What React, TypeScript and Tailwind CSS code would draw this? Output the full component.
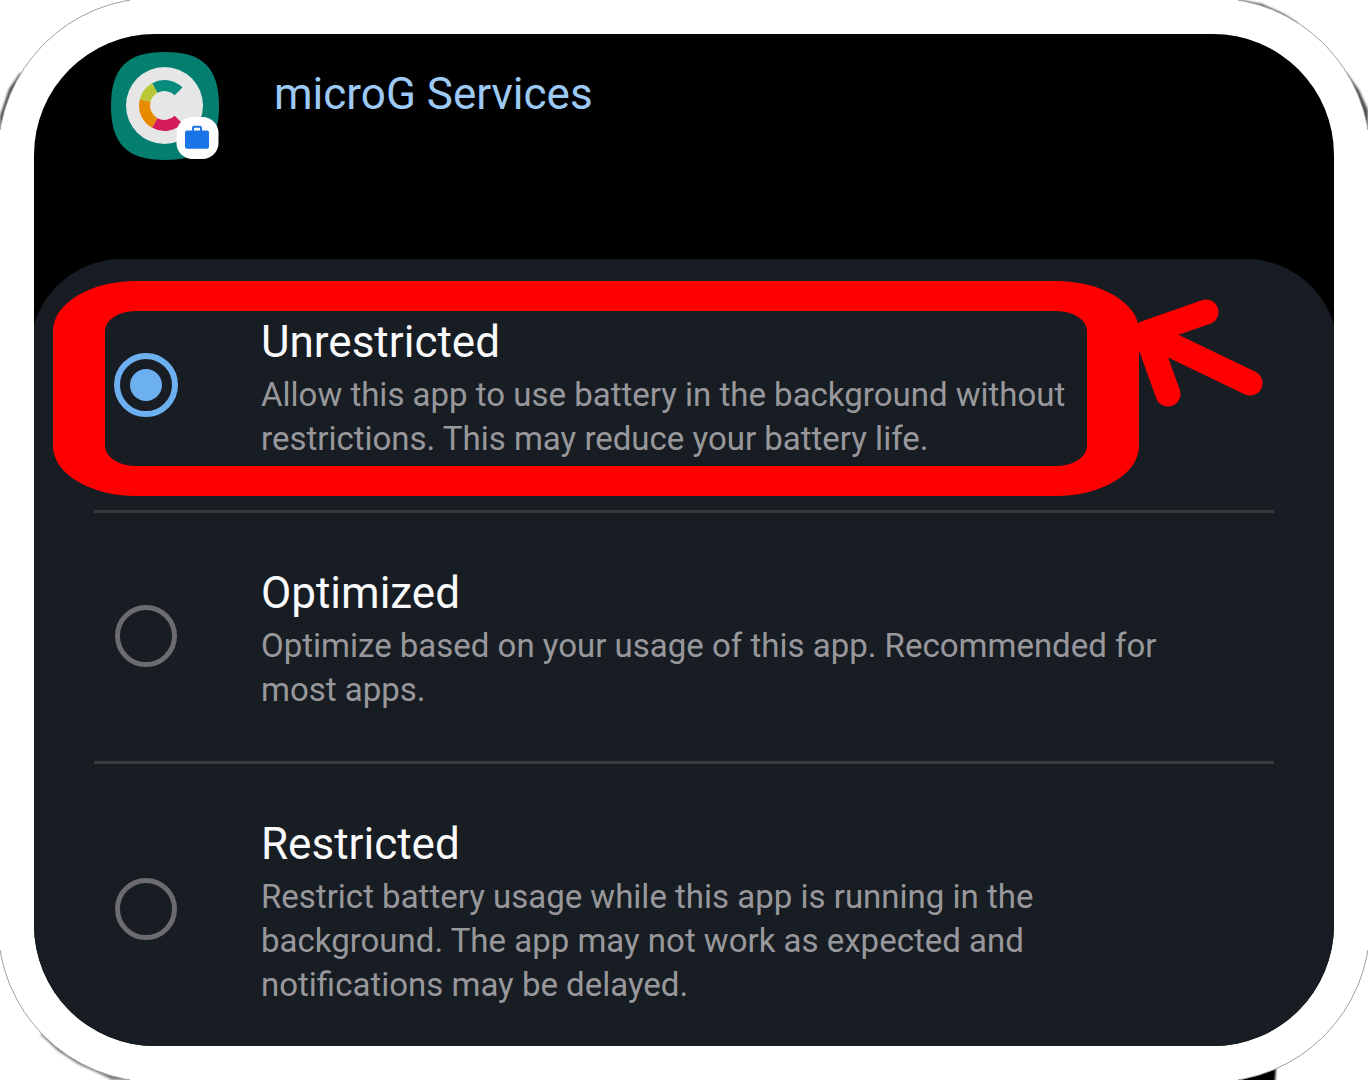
import { useState } from "react";

type Option = { id: string; title: string; text: string };

const options: Option[] = [
  {
    id: "unrestricted",
    title: "Unrestricted",
    text: "Allow this app to use battery in the background without restrictions. This may reduce your battery life.",
  },
  {
    id: "optimized",
    title: "Optimized",
    text: "Optimize based on your usage of this app. Recommended for most apps.",
  },
  {
    id: "restricted",
    title: "Restricted",
    text: "Restrict battery usage while this app is running in the background. The app may not work as expected and notifications may be delayed.",
  },
];

function AppIcon() {
  return (
    <svg viewBox="0 0 108 108" className="size-[108px] shrink-0" aria-hidden="true">
      <path
        d="M54 0C92 0 108 16 108 54S92 108 54 108 0 92 0 54 16 0 54 0Z"
        fill="#047e6f"
      />
      <circle cx="53.5" cy="53.5" r="38.5" fill="#e6e6e6" />
      <g fill="none" strokeWidth="11">
        <path d="M67.6 39.4A20 20 0 0 0 43.8 36" stroke="#078b7d" />
        <path d="M43.8 36A20 20 0 0 0 34.1 48.7" stroke="#b9c735" />
        <path d="M34.1 48.7A20 20 0 0 0 43.8 71" stroke="#e88a00" />
        <path d="M43.8 71A20 20 0 0 0 67.6 67.6" stroke="#d41b5b" />
      </g>
      <rect x="65.5" y="65" width="42" height="42" rx="16" fill="#fdfdfd" />
      <rect x="74" y="78.5" width="24" height="18.2" rx="2" fill="#1b73e8" />
      <path d="M82 79V76Q82 74.8 83.2 74.8H88.8Q90 74.8 90 76V79" fill="none" stroke="#1b73e8" strokeWidth="2" />
    </svg>
  );
}

/* Thin outer edge of the frame; `shade` is the dark patch peeking out behind it. */
function Corner({ className, shade }: { className: string; shade: string }) {
  return (
    <svg viewBox="0 0 130 130" className={className} aria-hidden="true">
      <path d={shade} fill="currentColor" className="blur-[1px]" />
      <circle cx="155" cy="155" r="157" fill="#fff" stroke="#a0a0a0" strokeWidth="1" />
    </svg>
  );
}

function HighlightRing() {
  return (
    <div className="pointer-events-none absolute top-[19px] right-[135px] bottom-[14px] left-[-41px] rounded-[83px/50px] border-x-[52px] border-y-[30px] border-[#ff0000]" />
  );
}

function Arrow() {
  return (
    <svg
      viewBox="0 0 140 120"
      className="pointer-events-none absolute top-7 right-1 h-[120px] w-[140px]"
      aria-hidden="true"
    >
      <path
        d="M76 22L16 43L38 104M16 43L120 93"
        fill="none"
        stroke="#ff0000"
        strokeWidth="25"
        strokeLinecap="round"
        strokeLinejoin="round"
      />
    </svg>
  );
}

export default function App() {
  const [selected, setSelected] = useState("unrestricted");

  return (
    <main className="relative min-h-screen overflow-hidden bg-white p-[34px] font-['Roboto',sans-serif]">
      <Corner
        className="absolute top-0 left-0 size-[130px] text-black/70"
        shade="M0 128L0 116L9 89L20 73L30 75L8 125Z"
      />
      <Corner
        className="absolute top-0 right-0 size-[130px] -scale-x-100 text-black/70"
        shade="M128 0L106 4L84 14L70 23L90 30L128 10ZM0 128L0 110L9 90L22 72L30 90Z"
      />
      <Corner
        className="absolute bottom-0 left-0 size-[130px] -scale-y-100 text-black/50"
        shade="M128 0L112 0L98 7L78 16L58 29L40 46L60 50L128 12Z"
      />
      <Corner
        className="absolute right-0 bottom-0 size-[130px] -scale-100 text-black"
        shade="M130 -4L93 -4L92 14L128 12Z"
      />

      <section className="relative overflow-hidden rounded-[121px] bg-black">
        <header className="flex h-[225px] items-start gap-[55px] pt-[18px] pl-[77px]">
          <AppIcon />
          <h1 className="mt-3 text-[44px] leading-[60px] text-[#9ccaf5]">microG Services</h1>
        </header>

        <div
          role="radiogroup"
          aria-label="Battery usage"
          className="-mx-1 divide-y-[3px] divide-[#3a3a3d] rounded-t-[92px] bg-[#181d24] px-16 pt-[3px]"
        >
          {options.map((o) => (
            <label
              key={o.id}
              htmlFor={o.id}
              className="relative flex items-center gap-[83px] pt-[50px] pr-[74px] pb-[49px] pl-5 last:pb-[39px]"
            >
              {o.id === "unrestricted" && <HighlightRing />}
              {o.id === "unrestricted" && <Arrow />}
              <input
                id={o.id}
                type="radio"
                name="battery"
                checked={selected === o.id}
                onChange={() => setSelected(o.id)}
                className="relative mx-px mb-1 grid size-[62px] shrink-0 appearance-none place-items-center rounded-full border-[5px] border-[#6c6c70] checked:mx-0 checked:size-16 checked:border-[6px] checked:border-[#6db0f0] checked:before:size-8 checked:before:rounded-full checked:before:bg-[#6db0f0]"
              />
              <span className="relative flex-1">
                <span className="block text-[44px] leading-[61px] text-[#fafafc]">{o.title}</span>
                <span className="block text-[33px] leading-[44px] text-[#98989c]">{o.text}</span>
              </span>
            </label>
          ))}
        </div>
      </section>
    </main>
  );
}
